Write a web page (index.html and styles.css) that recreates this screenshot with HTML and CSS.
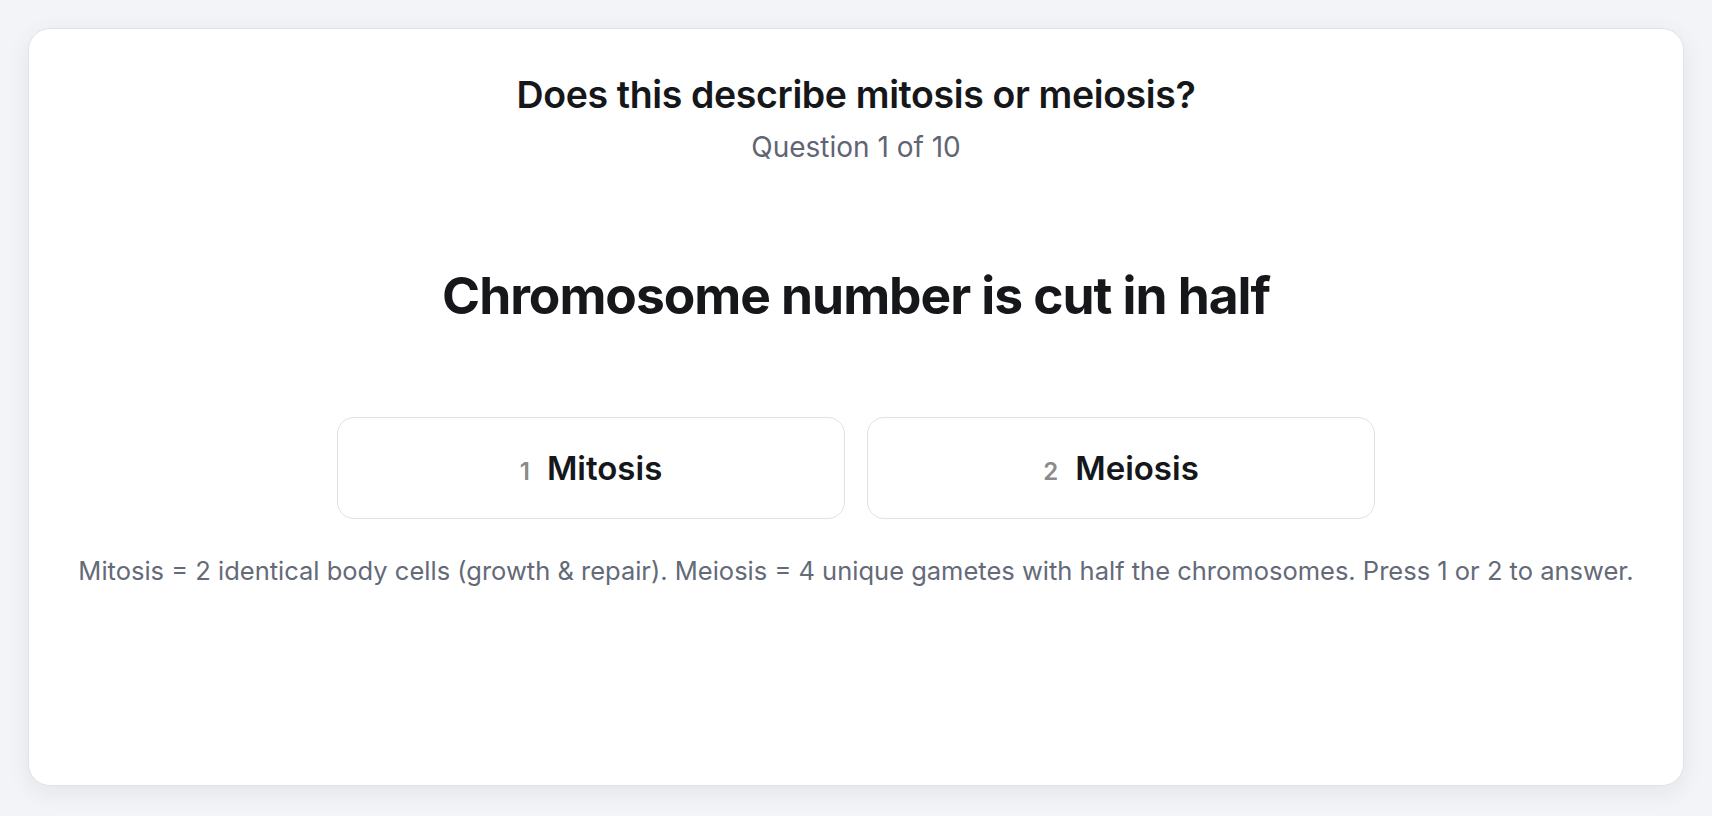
FILE: index.html
```html
<html>
    <head>
        <title>Mitosis or Meiosis</title>
        <link rel="stylesheet" href="styles.css">
    </head>
    <body>
        <div class="card">
            <h2 class="title">Does this describe mitosis or meiosis?</h2>
            <div class="counter">Question 1 of 10</div>
            <h1 class="statement">Chromosome number is cut in half</h1>
            <div class="choices">
                <button class="choice"><span class="key">1</span>Mitosis</button>
                <button class="choice"><span class="key">2</span>Meiosis</button>
            </div>
            <p class="hint">Mitosis = 2 identical body cells (growth &amp; repair). Meiosis = 4 unique gametes with half the chromosomes. Press 1 or 2 to answer.</p>
        </div>
    </body>
</html>
```

FILE: styles.css
```css
body{
    margin: 0;
    padding: 28px;
    background: #f3f4f7;
    font-family: Inter, "Noto Sans", sans-serif;
    color: #16171b;
}
.card{
    box-sizing: border-box;
    height: 758px;
    background: white;
    border: 1px solid #e1e3e8;
    border-radius: 22px;
    box-shadow: 0 6px 24px rgba(20, 30, 60, 0.07);
    padding-top: 46px;
    display: flex;
    flex-direction: column;
    align-items: center;
}
.title{
    margin: 0;
    font-size: 37.5px;
    line-height: 40px;
    font-weight: 600;
    letter-spacing: -0.01em;
}
.counter{
    margin-top: 16px;
    font-size: 28px;
    line-height: 32px;
    color: #5f6573;
}
.statement{
    margin: 100px 0 0;
    font-size: 51.5px;
    line-height: 64px;
    font-weight: 700;
    letter-spacing: -0.02em;
}
.choices{
    margin-top: 90px;
    display: grid;
    grid-template-columns: 508px 508px;
    gap: 22px;
}
.choice{
    height: 102px;
    background: white;
    border: 1.5px solid #dfe1e6;
    border-radius: 17px;
    font-family: Inter, "Noto Sans", sans-serif;
    font-size: 33px;
    font-weight: 600;
    color: #16171b;
    display: flex;
    align-items: center;
    justify-content: center;
    cursor: pointer;
}
.key{
    font-size: 24px;
    font-weight: 600;
    color: #8a8a8a;
    margin-right: 17px;
    margin-top: 6px;
}
.hint{
    margin: 36px 0 0;
    font-size: 25.5px;
    line-height: 32px;
    color: #646a78;
}
```
